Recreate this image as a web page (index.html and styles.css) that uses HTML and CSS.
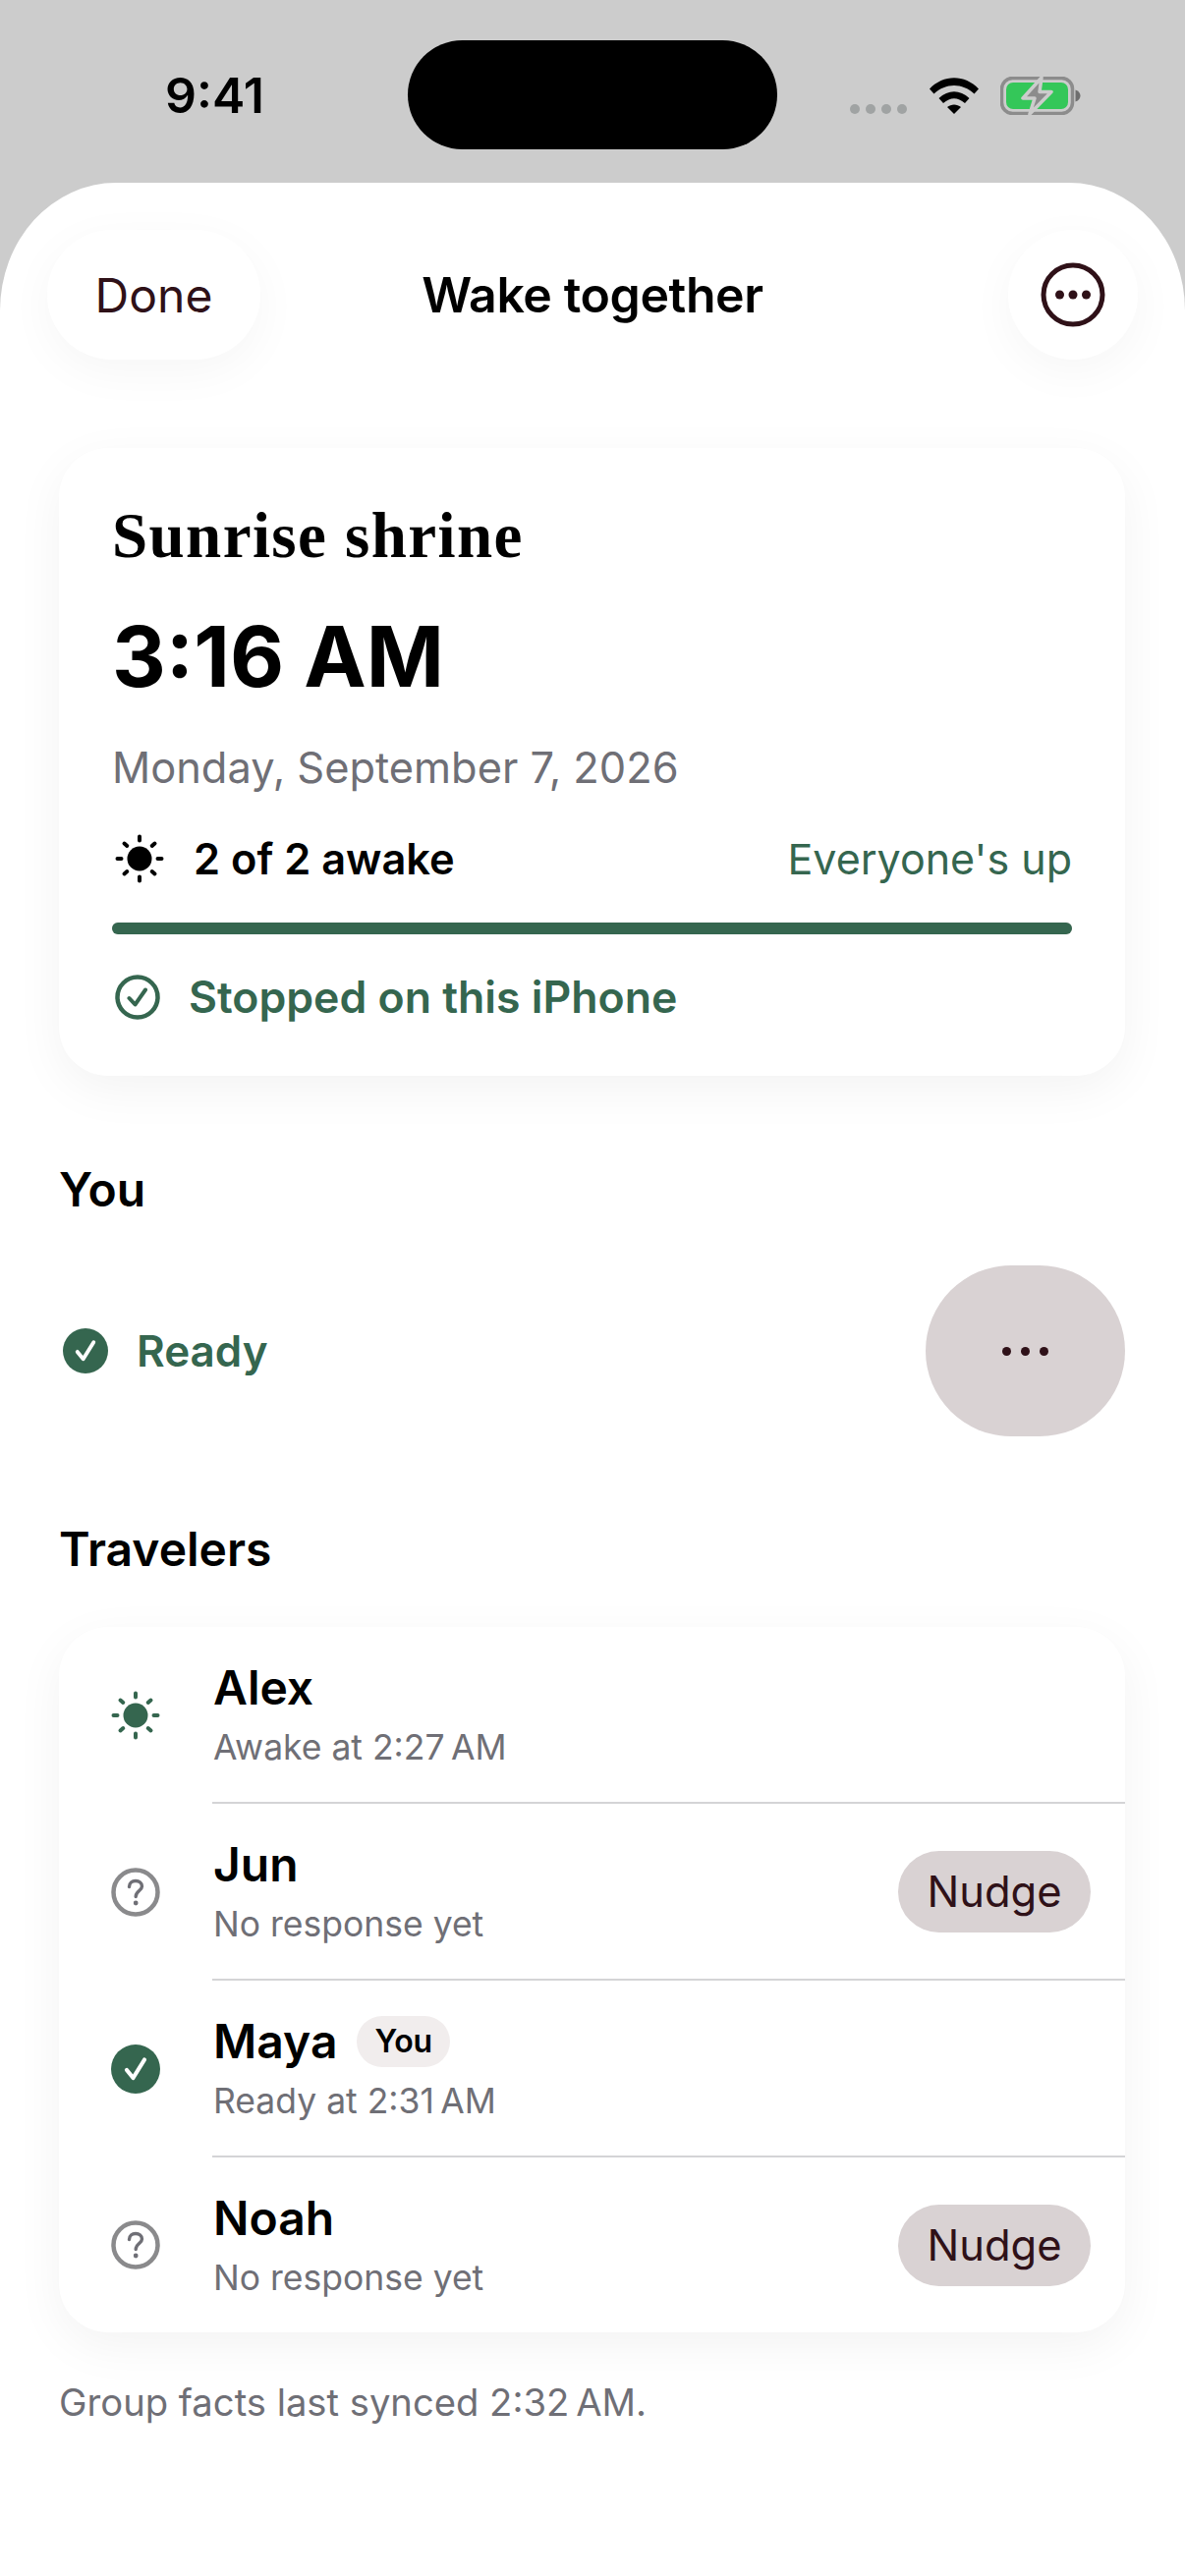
FILE: index.html
```html
<!DOCTYPE html>
<html lang="en">
<head>
    <meta charset="UTF-8">
    <meta name="viewport" content="width=device-width, initial-scale=1.0">
    <title>Wake together</title>
    <link rel="stylesheet" href="styles.css">
</head>
<body>
    <svg class="defs" width="0" height="0" aria-hidden="true">
        <symbol id="sun" viewBox="0 0 50 50">
            <circle cx="25" cy="25" r="12.5" fill="currentColor"/>
            <g stroke="currentColor" stroke-width="4" stroke-linecap="round">
                <path d="M25 2.500V6.500M25 43.500V47.500M2.500 25H6.500M43.500 25H47.500M9.500 9.500L12.300 12M37.700 38L40.500 40.500M9.500 40.500L12.300 38M37.700 12L40.500 9.500"/>
            </g>
        </symbol>
        <symbol id="question" viewBox="0 0 50 50">
            <circle cx="25" cy="25" r="22.500" fill="none" stroke="#8a8a8c" stroke-width="4.500"/>
            <path d="M18.500 19.500C18.500 15.500 21.500 13.500 25 13.500C28.800 13.500 31.500 15.800 31.500 19C31.500 23.500 25.200 23.800 25.200 29.500" fill="none" stroke="#6f6f76" stroke-width="3.400" stroke-linecap="round"/>
            <circle cx="25.200" cy="36" r="2.400" fill="#6f6f76"/>
        </symbol>
        <symbol id="check-solid" viewBox="0 0 50 50">
            <circle cx="25" cy="25" r="25" fill="#35664f"/>
            <path d="M16 26L22.500 34L34 15.500" fill="none" stroke="#fff" stroke-width="4.200" stroke-linecap="round" stroke-linejoin="round"/>
        </symbol>
    </svg>

    <div class="status-bar">
        <div class="clock">9:41</div>
        <div class="island"></div>
        <div class="status-icons">
            <div class="signal"><i></i><i></i><i></i><i></i></div>
            <svg class="wifi" width="50" height="37" viewBox="0 0 50 37">
                <path d="M0 11.500C14 -3.500 36 -3.500 50 11.500L45.500 16.500C33.500 5 16.500 5 4.500 16.500Z"/>
                <path d="M9.500 21C19 12 31 12 40.500 21L36 26C28.500 19.500 21.500 19.500 14 26Z"/>
                <path d="M18 30C22 26.500 28 26.500 32 30L25 37Z"/>
            </svg>
            <svg class="battery" width="82" height="39" viewBox="0 0 82 39">
                <rect x="1.500" y="1.500" width="72" height="36" rx="11" fill="none" stroke="#8c8c8c" stroke-width="3.500"/>
                <rect x="6" y="6" width="63" height="27" rx="7" fill="#34c759"/>
                <path d="M76.500 13.500C80 14.500 81.500 17 81.500 19.500C81.500 22 80 24.500 76.500 25.500Z" fill="#6e6e6e"/>
                <path d="M42 1L23 22H35L30 38L52 15.500H40Z" fill="#8c8c8c" stroke="#cccccc" stroke-width="3.500" stroke-linejoin="round"/>
            </svg>
        </div>
    </div>

    <div class="sheet">
        <header class="nav">
            <button class="nav-btn done">Done</button>
            <h1>Wake together</h1>
            <button class="nav-btn more" aria-label="More">
                <svg width="66" height="66" viewBox="0 0 66 66">
                    <circle cx="33" cy="33" r="30" fill="none" stroke="#2f1118" stroke-width="5"/>
                    <circle cx="19.500" cy="33" r="4.500" fill="#2f1118"/>
                    <circle cx="33" cy="33" r="4.500" fill="#2f1118"/>
                    <circle cx="46.500" cy="33" r="4.500" fill="#2f1118"/>
                </svg>
            </button>
        </header>

        <section class="card summary">
            <h2 class="place">Sunrise shrine</h2>
            <div class="alarm-time">3:16 AM</div>
            <div class="alarm-date">Monday, September 7, 2026</div>
            <div class="awake-row">
                <svg class="icon-sun"><use href="#sun"/></svg>
                <span class="awake-count">2 of 2 awake</span>
                <span class="awake-note">Everyone's up</span>
            </div>
            <div class="progress"><div class="progress-fill" style="width: 100%"></div></div>
            <div class="stopped">
                <svg class="icon-stopped" viewBox="0 0 46 46">
                    <circle cx="23" cy="23" r="20.500" fill="none" stroke="#35664f" stroke-width="4.500"/>
                    <path d="M14.500 24L20.500 30.500L31 15.500" fill="none" stroke="#35664f" stroke-width="4" stroke-linecap="round" stroke-linejoin="round"/>
                </svg>
                <span>Stopped on this iPhone</span>
            </div>
        </section>

        <h3 class="section-title you-title">You</h3>
        <div class="you-row">
            <svg class="icon-ready"><use href="#check-solid"/></svg>
            <span class="ready-label">Ready</span>
            <button class="dots-btn" aria-label="Options"><i></i><i></i><i></i></button>
        </div>

        <h3 class="section-title">Travelers</h3>
        <section class="card travelers">
            <div class="traveler">
                <svg class="status-icon sun-green"><use href="#sun"/></svg>
                <div class="traveler-body">
                    <div class="traveler-text">
                        <div class="name">Alex</div>
                        <div class="detail">Awake at 2:27&#8201;AM</div>
                    </div>
                </div>
            </div>
            <div class="traveler">
                <svg class="status-icon"><use href="#question"/></svg>
                <div class="traveler-body">
                    <div class="traveler-text">
                        <div class="name">Jun</div>
                        <div class="detail">No response yet</div>
                    </div>
                    <button class="nudge">Nudge</button>
                </div>
            </div>
            <div class="traveler">
                <svg class="status-icon"><use href="#check-solid"/></svg>
                <div class="traveler-body">
                    <div class="traveler-text">
                        <div class="name">Maya <span class="you-badge">You</span></div>
                        <div class="detail">Ready at 2:31&#8201;AM</div>
                    </div>
                </div>
            </div>
            <div class="traveler">
                <svg class="status-icon"><use href="#question"/></svg>
                <div class="traveler-body">
                    <div class="traveler-text">
                        <div class="name">Noah</div>
                        <div class="detail">No response yet</div>
                    </div>
                    <button class="nudge">Nudge</button>
                </div>
            </div>
        </section>

        <p class="footnote">Group facts last synced 2:32&#8201;AM.</p>
    </div>
</body>
</html>
```

FILE: styles.css
```css
* {
    box-sizing: border-box;
}
html, body {
    margin: 0;
    padding: 0;
}
body {
    width: 1206px;
    height: 2622px;
    overflow: hidden;
    background-color: #cccccc;
    font-family: Inter, "Liberation Sans", sans-serif;
    color: #000;
}
button {
    font-family: inherit;
    border: none;
    padding: 0;
    cursor: pointer;
}
h1, h2, h3, p {
    margin: 0;
}
.defs {
    display: block;
    height: 0;
}

/* status bar */
.status-bar {
    display: grid;
    grid-template-columns: 415px 376px 1fr;
    height: 186px;
    padding-top: 41px;
}
.clock {
    padding-left: 168px;
    padding-top: 32px;
    font-size: 50px;
    line-height: 48px;
    font-weight: 600;
}
.island {
    height: 111px;
    background-color: #000;
    border-radius: 56px;
}
.status-icons {
    display: flex;
    align-items: flex-start;
    padding-top: 37px;
    padding-left: 74px;
}
.signal {
    display: flex;
    gap: 6px;
    margin-top: 28px;
    margin-right: 23px;
}
.signal i {
    width: 10px;
    height: 10px;
    border-radius: 50%;
    background-color: #a0a3a3;
}
.wifi {
    margin-top: 1px;
    margin-right: 22px;
}

/* sheet */
.sheet {
    height: 2436px;
    background-color: #fff;
    border-radius: 118px 118px 0 0 / 130px 130px 0 0;
    padding: 48px 61px 0 60px;
}
.nav {
    display: grid;
    grid-template-columns: 1fr auto 1fr;
    align-items: center;
    margin: 0 -13px 90px -12px;
}
.nav h1 {
    font-size: 50px;
    font-weight: 600;
    letter-spacing: -0.4px;
}
.nav-btn {
    height: 132px;
    background-color: #fff;
    border-radius: 66px;
    box-shadow: 0 12px 48px rgba(0, 0, 0, 0.04);
    color: #2f1118;
}
.done {
    justify-self: start;
    width: 217px;
    font-size: 48px;
}
.more {
    justify-self: end;
    display: flex;
    align-items: center;
    justify-content: center;
    width: 132px;
}

/* cards */
.card {
    background-color: #fff;
    border-radius: 50px;
    box-shadow: 0 14px 50px rgba(0, 0, 0, 0.05);
}
.summary {
    height: 639px;
    padding: 54px 54px 0;
}
.place {
    font-family: "Liberation Serif", serif;
    font-size: 65px;
    line-height: 70px;
    font-weight: 700;
    letter-spacing: 1.4px;
}
.alarm-time {
    margin-top: 39px;
    font-size: 85px;
    line-height: 100px;
    font-weight: 700;
}
.alarm-date {
    margin-top: 34px;
    font-size: 43.4px;
    line-height: 56px;
    color: #6f6f76;
}
.awake-row {
    display: flex;
    align-items: center;
    margin-top: 37px;
    height: 56px;
}
.icon-sun {
    width: 50px;
    height: 50px;
    margin-left: 3px;
    margin-right: 30px;
    color: #000;
}
.awake-count {
    font-size: 43.4px;
    font-weight: 600;
}
.awake-note {
    margin-left: auto;
    font-size: 43px;
    color: #35664f;
}
.progress {
    height: 12px;
    margin-top: 37px;
    border-radius: 6px;
    background-color: #d9d2d3;
}
.progress-fill {
    height: 100%;
    border-radius: 6px;
    background-color: #35664f;
}
.stopped {
    display: flex;
    align-items: center;
    margin-top: 37px;
    margin-left: 3px;
    font-size: 44.6px;
    font-weight: 600;
    color: #35664f;
}
.icon-stopped {
    width: 46px;
    height: 46px;
    margin-right: 29px;
}

/* you */
.section-title {
    font-size: 48px;
    line-height: 58px;
    font-weight: 600;
}
.you-title {
    margin-top: 87px;
}
.you-row {
    display: flex;
    align-items: center;
    margin-top: 48px;
    margin-bottom: 86px;
}
.icon-ready {
    width: 46px;
    height: 46px;
    margin-left: 4px;
    margin-right: 29px;
}
.ready-label {
    font-size: 44px;
    font-weight: 600;
    color: #35664f;
}
.dots-btn {
    display: flex;
    align-items: center;
    justify-content: center;
    gap: 10px;
    width: 203px;
    height: 174px;
    margin-left: auto;
    border-radius: 87px;
    background-color: #d9d2d3;
}
.dots-btn i {
    width: 9px;
    height: 9px;
    border-radius: 50%;
    background-color: #2f1118;
}

/* travelers */
.travelers {
    margin-top: 50px;
    height: 718px;
    overflow: hidden;
}
.traveler {
    display: flex;
    align-items: center;
    height: 180px;
}
.traveler:last-child {
    height: 178px;
}
.status-icon {
    flex: none;
    width: 50px;
    height: 50px;
    margin-left: 53px;
    margin-right: 53px;
}
.sun-green {
    color: #35664f;
}
.traveler-body {
    display: flex;
    flex: 1;
    align-items: center;
    height: 100%;
    border-bottom: 2px solid #d4d4d6;
}
.traveler:last-child .traveler-body {
    border-bottom: none;
}
.traveler-text {
    flex: 1;
    padding-top: 1px;
    padding-left: 1px;
}
.name {
    display: flex;
    align-items: center;
    gap: 20px;
    font-size: 48px;
    line-height: 56px;
    font-weight: 600;
}
.you-badge {
    padding: 0 18px;
    font-size: 32px;
    line-height: 52px;
    border-radius: 26px;
    background-color: #f1eded;
}
.detail {
    margin-top: 11px;
    font-size: 35.5px;
    line-height: 44px;
    color: #6f6f76;
}
.nudge {
    width: 196px;
    height: 83px;
    margin-right: 35px;
    border-radius: 42px;
    background-color: #d9d2d3;
    font-size: 43.5px;
    color: #2f1118;
}
.footnote {
    margin-top: 47px;
    font-size: 38.2px;
    line-height: 48px;
    color: #6f6f76;
}
```
